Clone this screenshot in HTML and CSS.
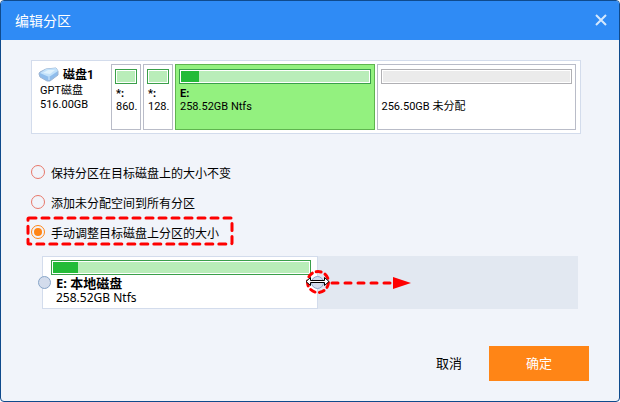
FILE: index.html
```html
<!DOCTYPE html>
<html lang="zh-CN">
<head>
  <meta charset="UTF-8">
  <meta name="viewport" content="width=device-width, initial-scale=1.0">
  <title>编辑分区</title>
  <link rel="stylesheet" href="styles.css">
</head>
<body>
  <div class="dialog">
    <header class="title-bar">
      <h1>编辑分区</h1>
      <button class="close-btn" aria-label="关闭">
        <svg width="12" height="12" viewBox="0 0 12 12"><path d="M1 1L11 11M11 1L1 11" stroke="#d5e8fd" stroke-width="2"/></svg>
      </button>
    </header>

    <main class="content">
      <div class="disk">
        <div class="disk-info">
          <h2>
            <svg width="22" height="16" viewBox="0 0 22 16">
              <path d="M1 7Q1 6 2 5L8 2L18 1L20 4V8L12 14H9L2 10Z" fill="#8fbdec" stroke="#9db4d2"/>
              <path d="M2 6L8 2L18 1L20 4L11 10Z" fill="#c3e2fa"/>
              <path d="M5 6L10 3L17 3L12 7Z" fill="#e0f2fd"/>
              <path d="M11 10V13" stroke="#d8ebfb"/>
            </svg>
            磁盘1
          </h2>
          <p>GPT磁盘</p>
          <p>516.00GB</p>
        </div>
        <div class="partition small">
          <div class="bar"><div class="fill"></div></div>
          <h3>*:</h3>
          <p>860.</p>
        </div>
        <div class="partition small">
          <div class="bar"><div class="fill"></div></div>
          <h3>*:</h3>
          <p>128.</p>
        </div>
        <div class="partition selected">
          <div class="bar"><div class="fill"><div class="used" style="width: 9.5%"></div></div></div>
          <h3>E:</h3>
          <p>258.52GB Ntfs</p>
        </div>
        <div class="partition free">
          <div class="bar"><div class="fill"></div></div>
          <h3></h3>
          <p>256.50GB 未分配</p>
        </div>
      </div>

      <div class="options">
        <label class="option"><input type="radio" name="mode">保持分区在目标磁盘上的大小不变</label>
        <label class="option"><input type="radio" name="mode">添加未分配空间到所有分区</label>
        <label class="option"><input type="radio" name="mode" checked>手动调整目标磁盘上分区的大小
          <svg class="mark-box" width="208" height="30" viewBox="0 0 208 30">
            <rect x="2" y="2" width="204" height="26" rx="1" fill="none" stroke="#fe0000" stroke-width="3" stroke-dasharray="7 6" stroke-linecap="round"/>
          </svg>
        </label>
      </div>

      <div class="track">
        <div class="volume" style="width: 51.5%">
          <div class="bar"><div class="fill"><div class="used" style="width: 9.8%"></div></div></div>
          <h3>E: 本地磁盘</h3>
          <p>258.52GB Ntfs</p>
          <span class="handle left"></span>
          <span class="handle right"></span>
          <svg class="drag-hint" width="106" height="26" viewBox="0 0 106 26">
            <circle cx="13" cy="13" r="10.5" fill="none" stroke="#fe0000" stroke-width="3" stroke-dasharray="5 4.4" stroke-linecap="round" transform="rotate(-100 13 13)"/>
            <path d="M1 12.5L5.5 8.5V11.5H19.5V8.5L24 12.5L19.5 16.5V13.5H5.5V16.5Z" fill="#fff" stroke="#000"/>
            <path d="M27 14H88" stroke="#fe0000" stroke-width="3" stroke-dasharray="6 7" stroke-linecap="round"/>
            <path d="M88 8L106 14L88 20Z" fill="#fe0000"/>
          </svg>
        </div>
      </div>
    </main>

    <footer class="actions">
      <button class="cancel-btn">取消</button>
      <button class="ok-btn">确定</button>
    </footer>
  </div>
</body>
</html>
```

FILE: styles.css
```css
* {
  box-sizing: border-box;
}

body {
  margin: 0;
  background: #fff;
  font-family: "Noto Sans", "Noto Sans CJK SC", sans-serif;
  font-size: 12px;
  color: #000;
}

h1, h2, h3, p {
  margin: 0;
}

button {
  border: none;
  background: none;
  padding: 0;
  font-family: inherit;
  font-size: 13px;
  cursor: pointer;
}

.dialog {
  display: flex;
  flex-direction: column;
  min-height: 100vh;
  border: 1px solid #0f4a8c;
  border-radius: 4px;
  background: #f1f4fa;
  overflow: hidden;
}

.title-bar {
  display: flex;
  align-items: center;
  justify-content: space-between;
  height: 39px;
  padding: 0 12px 2px 14px;
  background: #2f8bf5;
  color: #fff;
}

.title-bar h1 {
  font-size: 14px;
  font-weight: normal;
}

.close-btn {
  display: flex;
}

.content {
  padding: 20px 38px 0 30px;
}

.disk {
  display: flex;
  gap: 2px;
  padding: 3px 4px;
  border: 1px solid #d3dcec;
  background: #fff;
  font-family: Roboto, "Noto Sans CJK SC", sans-serif;
  font-size: 11px;
  line-height: 13px;
}

.disk-info {
  width: 73px;
  padding: 2px 0 0 4px;
}

.disk-info h2 {
  display: flex;
  align-items: center;
  gap: 3px;
  height: 18px;
  margin-left: -2px;
  font-size: 12px;
}

.disk-info p {
  line-height: 14px;
}

.partition {
  flex: 1;
  height: 66px;
  padding: 4px 3px;
  border: 1px solid #b9bcc8;
  overflow: hidden;
  white-space: nowrap;
}

.partition.small {
  flex: none;
  width: 30px;
}

.partition.selected {
  border-color: #5fb54f;
  background: #93f17f;
}

.partition h3,
.partition p {
  height: 13px;
  padding-left: 1px;
  font-size: 11px;
}

.partition h3 {
  margin-top: 3px;
}

.bar {
  height: 15px;
  padding: 1px;
  border: 1px solid #3a9f4a;
  background: #fff;
}

.fill {
  height: 100%;
  background: #b9edb9;
}

.used {
  height: 100%;
  background: #23bb38;
}

.free .bar {
  border-color: #b0b0b4;
}

.free .fill {
  background: #ebebeb;
}

.options {
  padding-top: 24px;
}

.option {
  display: flex;
  align-items: center;
  gap: 6px;
  position: relative;
  height: 30px;
}

.option input {
  appearance: none;
  width: 14px;
  height: 14px;
  margin: 0 0 2px;
  border: 1px solid #e8786a;
  border-radius: 50%;
}

.option input:checked {
  padding: 2px;
  border: 1px solid #ff8516;
  background: #ff8516 content-box;
}

.mark-box {
  position: absolute;
  left: -5px;
  top: -2px;
}

.track {
  margin: 8px 3px 0 11px;
  background: #e2e8f1;
}

.volume {
  position: relative;
  height: 53px;
  padding: 3px 6px 0 8px;
  border: 1px solid #d3dcec;
  background: #fff;
}

.volume h3 {
  margin-top: 1px;
  padding-left: 5px;
  font-size: 13px;
  line-height: 14px;
}

.volume p {
  padding-left: 5px;
  line-height: 16px;
}

.handle {
  position: absolute;
  top: 19px;
  width: 13px;
  height: 13px;
  border: 1px solid #88a5c8;
  border-radius: 50%;
  background: #d3dcec;
}

.handle.left {
  left: -5px;
}

.handle.right {
  right: -7px;
}

.drag-hint {
  position: absolute;
  top: 12px;
  left: calc(100% - 12px);
}

.actions {
  display: flex;
  justify-content: flex-end;
  gap: 27px;
  margin-top: auto;
  padding: 0 30px 20px;
}

.actions button {
  height: 35px;
  padding-bottom: 2px;
}

.ok-btn {
  width: 100px;
  background: #ff8516;
  color: #fff;
}
```
